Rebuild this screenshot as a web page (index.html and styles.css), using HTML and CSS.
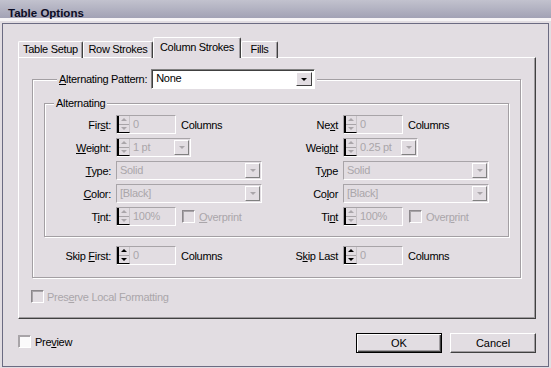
FILE: index.html
```html
<!DOCTYPE html>
<html lang="en">
<head>
    <meta charset="UTF-8">
    <title>Table Options</title>
    <link rel="stylesheet" href="styles.css">
</head>
<body>
<div class="dialog">
    <div class="titlebar">Table Options</div>

    <div class="frame">
        <div class="tabs">
            <div class="tab w1">Table Setup</div>
            <div class="tab w2">Row Strokes</div>
            <div class="tab active">Column Strokes</div>
            <div class="tab w4">Fills</div>
        </div>

        <div class="panel">
            <fieldset class="group outer">
                <legend class="pattern">
                    <span><u>A</u>lternating Pattern:</span>
                    <div class="select live">
                        <span class="value">None</span>
                        <span class="arrow"><i class="tri-down"></i></span>
                    </div>
                </legend>

                <fieldset class="group inner">
                    <legend class="caption">Alternating</legend>
                    <div class="grid">
                        <!-- row 1 -->
                        <span class="lbl">Fir<u>s</u>t:</span>
                        <div class="cell">
                            <div class="spin">
                                <span class="spin-btns"><i class="half"><i class="tri-up"></i></i><i class="half"><i class="tri-down"></i></i></span>
                                <span class="value">0</span>
                            </div>
                            <span>Columns</span>
                        </div>
                        <span class="lbl">Ne<u>x</u>t</span>
                        <div class="cell">
                            <div class="spin">
                                <span class="spin-btns"><i class="half"><i class="tri-up"></i></i><i class="half"><i class="tri-down"></i></i></span>
                                <span class="value">0</span>
                            </div>
                            <span>Columns</span>
                        </div>

                        <!-- row 2 -->
                        <span class="lbl"><u>W</u>eight:</span>
                        <div class="cell">
                            <div class="spin combo">
                                <span class="spin-btns"><i class="half"><i class="tri-up"></i></i><i class="half"><i class="tri-down"></i></i></span>
                                <span class="value">1 pt</span>
                                <span class="arrow"><i class="tri-down"></i></span>
                            </div>
                        </div>
                        <span class="lbl">Weig<u>h</u>t</span>
                        <div class="cell">
                            <div class="spin combo">
                                <span class="spin-btns"><i class="half"><i class="tri-up"></i></i><i class="half"><i class="tri-down"></i></i></span>
                                <span class="value">0.25 pt</span>
                                <span class="arrow"><i class="tri-down"></i></span>
                            </div>
                        </div>

                        <!-- row 3 -->
                        <span class="lbl"><u>T</u>ype:</span>
                        <div class="cell">
                            <div class="select">
                                <span class="value">Solid</span>
                                <span class="arrow"><i class="tri-down"></i></span>
                            </div>
                        </div>
                        <span class="lbl">T<u>y</u>pe</span>
                        <div class="cell">
                            <div class="select">
                                <span class="value">Solid</span>
                                <span class="arrow"><i class="tri-down"></i></span>
                            </div>
                        </div>

                        <!-- row 4 -->
                        <span class="lbl"><u>C</u>olor:</span>
                        <div class="cell">
                            <div class="select">
                                <span class="value">[Black]</span>
                                <span class="arrow"><i class="tri-down"></i></span>
                            </div>
                        </div>
                        <span class="lbl">Co<u>l</u>or</span>
                        <div class="cell">
                            <div class="select">
                                <span class="value">[Black]</span>
                                <span class="arrow"><i class="tri-down"></i></span>
                            </div>
                        </div>

                        <!-- row 5 -->
                        <span class="lbl">T<u>i</u>nt:</span>
                        <div class="cell">
                            <div class="spin">
                                <span class="spin-btns"><i class="half"><i class="tri-up"></i></i><i class="half"><i class="tri-down"></i></i></span>
                                <span class="value">100%</span>
                            </div>
                            <span class="check off"><span class="box"></span><span><u>O</u>verprint</span></span>
                        </div>
                        <span class="lbl">Ti<u>n</u>t</span>
                        <div class="cell">
                            <div class="spin">
                                <span class="spin-btns"><i class="half"><i class="tri-up"></i></i><i class="half"><i class="tri-down"></i></i></span>
                                <span class="value">100%</span>
                            </div>
                            <span class="check off"><span class="box"></span><span>Over<u>p</u>rint</span></span>
                        </div>
                    </div>
                </fieldset>

                <div class="grid skip">
                    <span class="lbl">Skip <u>F</u>irst:</span>
                    <div class="cell">
                        <div class="spin live">
                            <span class="spin-btns"><i class="half"><i class="tri-up"></i></i><i class="half"><i class="tri-down"></i></i></span>
                            <span class="value">0</span>
                        </div>
                        <span>Columns</span>
                    </div>
                    <span class="lbl">S<u>k</u>ip Last</span>
                    <div class="cell">
                        <div class="spin live">
                            <span class="spin-btns"><i class="half"><i class="tri-up"></i></i><i class="half"><i class="tri-down"></i></i></span>
                            <span class="value">0</span>
                        </div>
                        <span>Columns</span>
                    </div>
                </div>
            </fieldset>

            <div class="check off preserve"><span class="box"></span><span>Pres<u>e</u>rve Local Formatting</span></div>
        </div>

        <div class="footer">
            <div class="check preview"><span class="box white"></span><span>Pre<u>v</u>iew</span></div>
            <div class="buttons">
                <button class="btn default">OK</button>
                <button class="btn">Cancel</button>
            </div>
        </div>
    </div>
</div>
</body>
</html>
```

FILE: styles.css
```css
* {
    box-sizing: border-box;
}

body {
    margin: 0;
    background-color: #e2dde2;
    font-family: "Liberation Sans", Arial, sans-serif;
    font-size: 11px;
    letter-spacing: -0.3px;
    color: #000;
}

.dialog {
    width: 551px;
    height: 368px;
}

/* window title */
.titlebar {
    height: 21px;
    padding-left: 8px;
    background: linear-gradient(#c2c2ce, #a2a2b5) 0 0 / 100% 18px no-repeat, #f6f4f6;
    font-weight: bold;
    font-size: 11.5px;
    line-height: 26px;
    color: #0c0c24;
    letter-spacing: 0;
}

.frame {
    height: 344px;
    margin: 2px 2px 0;
    border: 1px solid #6b6b82;
}

/* tabs */
.tabs {
    display: flex;
    align-items: flex-end;
    height: 21px;
    margin-top: 13px;
    padding-left: 15px;
}

.tab {
    height: 17px;
    border: 1px solid;
    border-color: #fff #404040 transparent #fff;
    border-bottom: none;
    border-radius: 2px 2px 0 0;
    box-shadow: inset -1px 0 #a09ca0;
    text-align: center;
    line-height: 14px;
}

.w1 { width: 65px; }
.w2 { width: 70px; }
.w4 { width: 37px; }

.tab.active {
    position: relative;
    z-index: 1;
    width: 88px;
    height: 21px;
    background-color: #e2dde2;
    line-height: 18px;
}

.panel {
    height: 262px;
    width: 518px;
    margin: -1px 0 0 15px;
    border: 1px solid;
    border-color: #fff #404040 #404040 #fff;
    box-shadow: inset -1px -1px #a09ca0;
    display: flex;
    flex-direction: column;
    align-items: flex-start;
}

/* etched group boxes */
.group {
    margin: 0;
    border: 1px solid #a39fa3;
    box-shadow: inset 1px 1px #fff, 1px 1px #fff;
    min-width: 0;
}

.outer {
    width: 489px;
    margin: 11px 0 0 13px;
    padding: 0 11px 12px;
}

.pattern {
    display: flex;
    align-items: center;
    gap: 4px;
    margin-left: 13px;
    padding: 0 2px;
    background-color: #e2dde2;
}

.inner {
    margin-top: 8px;
    padding: 5px 0 10px;
}

.caption {
    margin-left: 9px;
    padding: 0 2px;
    line-height: 13px;
    background-color: #e2dde2;
}

.grid {
    display: grid;
    grid-template-columns: 66px 146px 71px 1fr;
    grid-auto-rows: 19px;
    column-gap: 5px;
    row-gap: 4px;
}

.skip {
    margin: 9px 0 0 1px;
}

.lbl {
    text-align: right;
    align-self: center;
}

.cell {
    display: flex;
    align-items: center;
    gap: 5px;
}

.value {
    flex: 1;
    padding-left: 3px;
    color: #aaa6aa;
    white-space: nowrap;
    overflow: hidden;
}

/* spinner */
.spin {
    display: flex;
    width: 60px;
    height: 19px;
    border: 1px solid;
    border-color: #a8a4a8 #fff #fff #a8a4a8;
    line-height: 17px;
}

.spin.combo {
    width: 75px;
}

.spin-btns {
    display: flex;
    flex-direction: column;
    width: 13px;
    border-left: 2px solid #000;
    border-bottom: 1px solid #000;
    border-right: 1px solid #c8c4c8;
    color: #aaa6aa;
}

.spin.live .spin-btns {
    color: #000;
}

.half {
    flex: 1;
    display: flex;
    align-items: center;
    justify-content: center;
}

.half:first-child {
    border-bottom: 1px solid #a8a4a8;
}

.tri-up, .tri-down {
    width: 0;
    height: 0;
    border-left: 3px solid transparent;
    border-right: 3px solid transparent;
}

.tri-up {
    border-bottom: 3px solid currentColor;
}

.tri-down {
    border-top: 3px solid currentColor;
}

/* drop-down lists */
.select {
    display: flex;
    width: 146px;
    height: 19px;
    border: 1px solid;
    border-color: #a8a4a8 #fff #fff #a8a4a8;
    line-height: 17px;
}

.select.live {
    width: 164px;
    height: 20px;
    border-color: #808080 #fff #fff #808080;
    box-shadow: inset 1px 1px #404040;
    background-color: #fff;
}

.select.live .value {
    color: #000;
    padding-left: 4px;
}

.arrow {
    display: flex;
    align-items: center;
    justify-content: center;
    width: 15px;
    margin: 1px;
    border: 1px solid;
    border-color: #fff #808080 #808080 #fff;
    background-color: #e2dde2;
    color: #aaa6aa;
}

.select.live .arrow {
    width: 16px;
    margin: 2px 2px 2px 0;
    border-color: #fff #404040 #404040 #fff;
    color: #000;
}

/* check boxes */
.check {
    display: flex;
    align-items: center;
    gap: 4px;
    white-space: nowrap;
}

.check.off {
    color: #aaa6aa;
}

.cell .check {
    margin-left: 1px;
}

.box {
    width: 13px;
    height: 13px;
    border: 1px solid;
    border-color: #8c888c #fff #fff #8c888c;
    box-shadow: inset 1px 1px #a8a4a8;
}

.box.white {
    background-color: #fbfafb;
    border-color: #a8a4a8 #fff #fff #a8a4a8;
}

.preserve {
    margin: 12px 0 0 12px;
    gap: 3px;
}

/* bottom row */
.footer {
    display: flex;
    justify-content: space-between;
    align-items: flex-start;
    margin-top: 14px;
    padding: 0 12px 0 15px;
}

.preview {
    margin-top: 2px;
}

.buttons {
    display: flex;
    gap: 8px;
}

.btn {
    width: 86px;
    height: 20px;
    padding: 0;
    font: inherit;
    color: #000;
    background-color: #e2dde2;
    border: 1px solid;
    border-color: #fff #404040 #404040 #fff;
    box-shadow: inset -1px -1px #a09ca0;
}

.btn.default {
    border: 1px solid #000;
    box-shadow: inset 1px 1px #fff, inset -1px -1px #404040, inset -2px -2px #a09ca0;
}
```
